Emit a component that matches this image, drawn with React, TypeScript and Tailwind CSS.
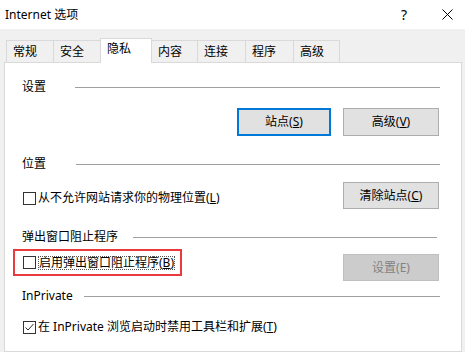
const font = { fontFamily: '"Noto Sans", "Noto Sans CJK SC", sans-serif' };

function Tab({ label, width, active }: { label: string; width: string; active?: boolean }) {
  if (active) {
    return (
      <div
        className={`${width} h-[25px] -mb-px bg-white border border-b-0 border-[#d9d9d9] pl-[6px] pt-[2px] text-[12px] leading-[16px] text-black relative z-10`}
      >
        {label}
      </div>
    );
  }
  return (
    <div
      className={`${width} h-[22px] border border-b-0 border-[#d9d9d9] -ml-px first:ml-0 pl-[6px] pt-[3px] text-[12px] leading-[16px] text-black bg-[#f0f0f0]`}
    >
      {label}
    </div>
  );
}

function Heading({ label, gap, lineMr = "mr-[21px]" }: { label: string; gap: string; lineMr?: string }) {
  return (
    <div className="flex items-center h-[16px] pl-[17px]">
      <span className="text-[12px] leading-[16px] text-black whitespace-nowrap">{label}</span>
      <div className={`flex-1 h-px bg-[#a0a0a0] ${gap} ${lineMr}`} />
    </div>
  );
}

function Box({ checked }: { checked?: boolean }) {
  return (
    <div className="w-[13px] h-[13px] border border-[#333333] bg-white shrink-0 flex items-center justify-center">
      {checked && (
        <svg width="11" height="11" viewBox="0 0 11 11">
          <path d="M1.5 5.5 L4 8 L9.5 2" fill="none" stroke="#333333" strokeWidth="1" />
        </svg>
      )}
    </div>
  );
}

function Btn({ children, primary, disabled, w = "w-[96px]", h = "h-[27px]" }: { children: React.ReactNode; primary?: boolean; disabled?: boolean; w?: string; h?: string }) {
  const look = primary
    ? "border-2 border-[#0078d7] bg-[#e1e1e1] text-black"
    : disabled
    ? "border border-[#bfbfbf] bg-[#cccccc] text-[#838383]"
    : "border border-[#adadad] bg-[#e1e1e1] text-black";
  return (
    <div className={`${w} ${h} ${look} flex items-center justify-center text-[12px] leading-[16px] shrink-0`}>
      {children}
    </div>
  );
}

export default function App() {
  return (
    <div className="w-[465px] h-[352px] bg-[#f0f0f0] overflow-hidden flex flex-col" style={font}>
      {/* title bar */}
      <div className="h-[29px] bg-white flex items-center pl-[5px] shrink-0">
        <span className="text-[12px] leading-[16px] text-black">Internet 选项</span>
        <span className="ml-auto text-[14px] leading-[16px] text-black mr-[35px]">?</span>
        <svg width="11" height="11" viewBox="0 0 11 11" className="mr-[12px]">
          <path d="M0.5 0.5 L10.5 10.5 M10.5 0.5 L0.5 10.5" stroke="#000" strokeWidth="1" />
        </svg>
      </div>

      <div className="flex-1 flex flex-col pl-[4px] pr-[3px] pt-[9px]">
        {/* tabs */}
        <div className="flex items-end pl-[2px] h-[24px]">
          <Tab label="常规" width="w-[48px]" />
          <Tab label="安全" width="w-[48px]" />
          <div className="-ml-px">
            <Tab label="隐私" width="w-[52px]" active />
          </div>
          <div className="-ml-px flex items-end">
            <Tab label="内容" width="w-[47px]" />
          </div>
          <Tab label="连接" width="w-[49px]" />
          <Tab label="程序" width="w-[49px]" />
          <Tab label="高级" width="w-[47px]" />
        </div>

        {/* panel */}
        <div className="flex-1 bg-white border border-[#d9d9d9] flex flex-col">
          <div className="mt-[16px]">
            <Heading label="设置" gap="ml-[29px]" />
          </div>
          <div className="flex justify-end gap-[12px] pr-[22px] mt-[13px]">
            <Btn primary w="w-[94px]" h="h-[28px]">
              站点(<span className="underline">S</span>)
            </Btn>
            <Btn w="w-[96px]" h="h-[28px]">
              高级(<span className="underline">V</span>)
            </Btn>
          </div>

          <div className="mt-[20px]">
            <Heading label="位置" gap="ml-[30px]" />
          </div>
          <div className="flex items-start mt-[10px] pl-[18px] pr-[22px]">
            <div className="flex items-center gap-[2px] mt-[8px]">
              <Box />
              <span className="text-[12px] leading-[16px] text-black whitespace-nowrap">
                从不允许网站请求你的物理位置(<span className="underline">L</span>)
              </span>
            </div>
            <div className="ml-auto">
              <Btn>
                清除站点(<span className="underline">C</span>)
              </Btn>
            </div>
          </div>

          <div className="mt-[20px]">
            <Heading label="弹出窗口阻止程序" gap="ml-[15px]" lineMr="mr-[24px]" />
          </div>
          <div className="flex items-start mt-[4px] pl-[8px] pr-[22px]">
            <div className="w-[169px] h-[27px] border-2 border-[#ea3a3f] flex items-center pl-[8px] gap-[2px]">
              <Box />
              <span className="text-[12px] leading-[14px] text-black whitespace-nowrap outline-1 outline-dotted outline-[#555] -outline-offset-1 px-px">
                启用弹出窗口阻止程序(<span className="underline">B</span>)
              </span>
            </div>
            <div className="ml-auto mt-[5px]">
              <Btn disabled>设置(E)</Btn>
            </div>
          </div>

          <div className="mt-[7px]">
            <Heading label="InPrivate" gap="ml-[11px]" />
          </div>
          <div className="flex items-center gap-[2px] mt-[15px] pl-[18px]">
            <Box checked />
            <span className="text-[12px] leading-[16px] text-black whitespace-nowrap">
              在 InPrivate 浏览启动时禁用工具栏和扩展(<span className="underline">T</span>)
            </span>
          </div>
        </div>
      </div>
    </div>
  );
}
